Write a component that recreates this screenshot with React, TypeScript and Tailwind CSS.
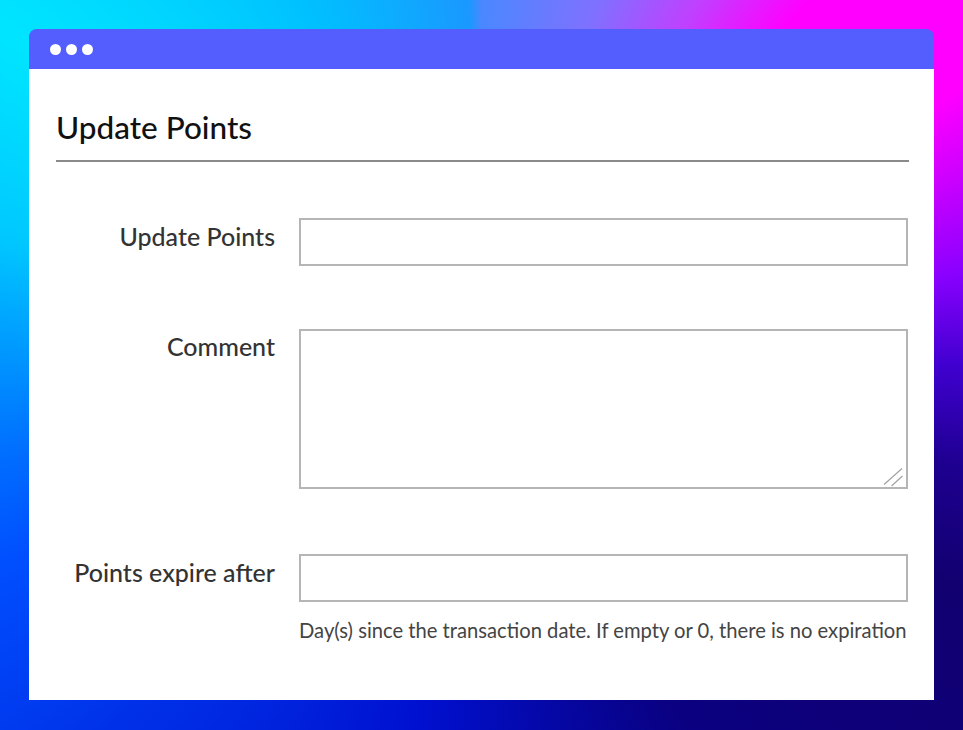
import React from "react";

export default function App() {
  return (
    <div
      className="w-[963px] h-[730px] flex flex-col pt-[29px] pb-[30px] pl-[29px] pr-[29px] bg-[conic-gradient(from_0deg_at_50%_50%,#4a88ff_0deg,#8070ff_18deg,#c040ff_31deg,#ff00ff_42deg,#ff00ff_60deg,#8a00ff_79deg,#4000d0_90deg,#1e0090_102deg,#120070_115deg,#0a0080_150deg,#0010d0_190deg,#0030e8_225deg,#0050ff_248deg,#0070ff_260deg,#00a0ff_274deg,#00c8ff_285deg,#00e5ff_305deg,#00c0ff_334deg,#1a98ff_358deg,#4a88ff_360deg)]"
      style={{ fontFamily: "Lato, 'Noto Sans', sans-serif" }}
    >
      <div className="flex-1 flex flex-col">
        <div className="h-[40px] rounded-t-[8px] bg-[#545efe] flex items-center pl-[21px] gap-[5px]">
          <span className="w-[11px] h-[11px] rounded-full bg-white" />
          <span className="w-[11px] h-[11px] rounded-full bg-white" />
          <span className="w-[11px] h-[11px] rounded-full bg-white" />
        </div>
        <div className="flex-1 bg-white pl-[27px] pr-[25px] pt-[40px]">
          <h1 className="text-[31.5px] leading-[36px] font-medium text-[#111]">Update Points</h1>
          <div className="mt-[15px] h-[2px] bg-[#8a8a8a]" />
          <div className="mt-[56px] grid grid-cols-[219px_1fr] gap-x-6 items-start text-[#333]">
            <label className="text-right text-[25px] leading-8 pt-[2px] font-medium whitespace-nowrap">Update Points</label>
            <input
              type="text"
              className="h-[48px] border-2 border-[#b5b5b5] bg-white outline-none px-2 w-[609px]"
            />
            <div className="col-span-2 h-[63px]" />
            <label className="text-right text-[25px] leading-8 pt-[1px] font-medium whitespace-nowrap">Comment</label>
            <div className="relative w-[609px] h-[160px]">
              <textarea className="h-[160px] w-[609px] border-2 border-[#b5b5b5] bg-white outline-none px-2 block resize-none" />
              <svg
                className="absolute right-[2px] bottom-[2px] pointer-events-none"
                width="24"
                height="24"
                viewBox="0 0 24 24"
              >
                <line x1="2" y1="21.5" x2="20" y2="5.5" stroke="#a0a0a0" strokeWidth="1.2" />
                <line x1="9.5" y1="23" x2="20.5" y2="13" stroke="#a0a0a0" strokeWidth="1.2" />
              </svg>
            </div>
            <div className="col-span-2 h-[65px]" />
            <label className="text-right text-[25px] leading-8 pt-[2px] font-medium whitespace-nowrap">Points expire after</label>
            <div className="flex flex-col">
              <input
                type="text"
                className="h-[48px] border-2 border-[#b5b5b5] bg-white outline-none px-2 w-[609px]"
              />
              <p className="mt-[14px] text-[20.2px] leading-7 text-[#444] whitespace-nowrap">
                Day(s) since the transaction date. If empty or 0, there is no expiration
              </p>
            </div>
          </div>
        </div>
      </div>
    </div>
  );
}
